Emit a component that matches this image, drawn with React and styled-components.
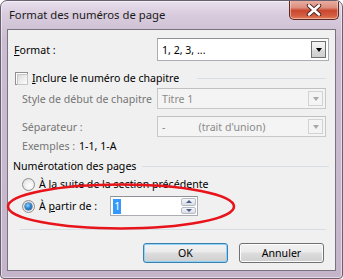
import React from 'react';
import styled, { createGlobalStyle } from 'styled-components';

const Global = createGlobalStyle`
  html, body { margin: 0; padding: 0; background: #ffffff; }
  body { font-family: "Noto Sans", "Open Sans", sans-serif; font-size: 10.6px; color: #000; }
  * { box-sizing: border-box; }
`;

const Window = styled.div`
  position: relative;
  width: 343px;
  height: 279px;
  border: 1px solid #6a5f70;
  border-radius: 7px 7px 4px 4px;
  background: linear-gradient(180deg, #e8e0ec 0px, #d8cbdd 14px, #cbbdd1 40px, #c4b5cb 100%);
  box-shadow: inset 0 0 0 1px rgba(255, 255, 255, 0.5);
  display: flex;
  flex-direction: column;
  padding: 0 6px 7px 6px;
  overflow: hidden;
`;

const TitleBar = styled.div`
  height: 28px;
  display: flex;
  align-items: flex-start;
  padding-left: 2px;
`;

const Title = styled.div`
  font-size: 11.3px;
  line-height: 16px;
  margin-top: 6px;
  color: #1a1a1a;
  flex: 1;
  white-space: nowrap;
`;

const CloseButton = styled.div`
  width: 50px;
  height: 20px;
  margin-top: -1px;
  margin-right: -3px;
  border: 1px solid #5a2a26;
  border-top: none;
  border-radius: 0 0 5px 5px;
  background: linear-gradient(180deg, #eab3a6 0%, #dc8e7e 40%, #c9482f 55%, #d25a3e 80%, #e07a57 100%);
  box-shadow: inset 0 0 0 1px rgba(255, 220, 210, 0.55);
  display: flex;
  align-items: center;
  justify-content: center;
`;

const Client = styled.div`
  flex: 1;
  border: 1px solid #7b7281;
  background: #f0f0f0;
  display: flex;
  flex-direction: column;
  padding: 8px 5px 0 6px;
`;

const FormatRow = styled.div`
  display: grid;
  grid-template-columns: 143px 172px;
  align-items: center;
  height: 23px;
`;

const Label = styled.span`
  color: ${(p) => (p.$disabled ? '#757575' : '#000')};
  white-space: nowrap;
  line-height: 14px;
`;

const Combo = styled.div`
  position: relative;
  height: ${(p) => p.$h}px;
  border: 1px solid ${(p) => (p.$disabled ? '#c8c8c8' : '#abadb3')};
  border-top-color: ${(p) => (p.$disabled ? '#c0c0c0' : '#8e9095')};
  background: ${(p) => (p.$disabled ? '#f4f4f4' : '#ffffff')};
  color: ${(p) => (p.$disabled ? '#8a8a8a' : '#000')};
  display: flex;
  align-items: center;
  padding-left: 4px;
  white-space: pre;
`;

const DropButton = styled.div`
  position: absolute;
  right: 2px;
  top: 2px;
  bottom: 2px;
  width: 15px;
  border: 1px solid ${(p) => (p.$disabled ? '#d2d2d2' : '#707070')};
  background: ${(p) =>
    p.$disabled
      ? '#f4f4f4'
      : 'linear-gradient(180deg, #f6f6f6 0%, #e8e8e8 50%, #d9d9d9 51%, #cfcfcf 100%)'};
  display: flex;
  align-items: center;
  justify-content: center;
`;

const Arrow = styled.div`
  width: 0;
  height: 0;
  border-left: 3.5px solid transparent;
  border-right: 3.5px solid transparent;
  border-top: 4px solid ${(p) => (p.$disabled ? '#a8a8a8' : '#000')};
`;

const CheckRow = styled.div`
  display: flex;
  align-items: center;
  height: 14px;
  margin-top: 10px;
  padding-left: 1px;
`;

const CheckBox = styled.div`
  width: 13px;
  height: 13px;
  border: 1px solid #8e8f8f;
  background: #fff;
  padding: 1px;
  margin-right: 4px;
  &::after {
    content: '';
    display: block;
    width: 100%;
    height: 100%;
    border: 1px solid #c6c6c6;
    background: linear-gradient(135deg, #dcdcdc 0%, #f0f0f0 60%, #fbfbfb 100%);
  }
`;

const Line = styled.div`
  flex: 1;
  height: 1px;
  background: #d5dfe5;
  margin-left: ${(p) => p.$ml}px;
  margin-right: ${(p) => p.$mr}px;
`;

const FieldRow = styled.div`
  display: grid;
  grid-template-columns: 135px 169px;
  align-items: center;
  height: 21px;
  margin-top: ${(p) => p.$mt}px;
  padding-left: 8px;
`;

const ExampleRow = styled.div`
  display: flex;
  align-items: center;
  height: 14px;
  margin-top: 2px;
  padding-left: 8px;
  gap: 4px;
`;

const HeadingRow = styled.div`
  display: flex;
  align-items: center;
  height: 14px;
  margin-top: 6px;
  margin-left: -1px;
`;

const RadioRow = styled.div`
  display: flex;
  align-items: center;
  height: ${(p) => p.$h}px;
  margin-top: ${(p) => p.$mt}px;
  padding-left: 8px;
`;

const Radio = styled.div`
  width: 13px;
  height: 13px;
  border-radius: 50%;
  border: 1px solid #8b8d8f;
  background: radial-gradient(circle at 60% 60%, #ffffff 0%, #f2f2f2 40%, #d4d4d4 100%);
  display: flex;
  align-items: center;
  justify-content: center;
  margin-right: 4px;
  &::after {
    content: '';
    display: ${(p) => (p.$checked ? 'block' : 'none')};
    width: 7px;
    height: 7px;
    border-radius: 50%;
    background: radial-gradient(circle at 40% 35%, #8fd6ff 0%, #2b88d8 45%, #173f7a 100%);
    box-shadow: 0 0 0 0.5px #1b4378;
  }
`;

const U = styled.span`
  text-decoration: underline;
  text-underline-offset: 1px;
`;

const SpinBox = styled.div`
  position: relative;
  width: 88px;
  height: 20px;
  margin-left: 13px;
  border: 1px solid #abadb3;
  border-top-color: #8e9095;
  background: #fff;
  display: flex;
  align-items: center;
  padding-left: 2px;
`;

const Selected = styled.span`
  background: #3399ff;
  color: #fff;
  padding: 0 1px;
  line-height: 15px;
`;

const SpinButtons = styled.div`
  position: absolute;
  right: 1px;
  top: 1px;
  bottom: 1px;
  width: 15px;
  display: flex;
  flex-direction: column;
  gap: 1px;
`;

const SpinHalf = styled.div`
  flex: 1;
  border: 1px solid #b6bcc6;
  border-radius: 2px;
  background: linear-gradient(180deg, #f6f7f9 0%, #e6e9ee 50%, #d9dde4 100%);
  display: flex;
  align-items: center;
  justify-content: center;
`;

const SmallArrow = styled.div`
  width: 0;
  height: 0;
  border-left: 3px solid transparent;
  border-right: 3px solid transparent;
  ${(p) => (p.$up ? 'border-bottom: 3px solid #4a5d86;' : 'border-top: 3px solid #4a5d86;')}
`;

const Separator = styled.div`
  height: 1px;
  background: #d5dfe5;
  margin: 13px 4px 0 6px;
`;

const ButtonRow = styled.div`
  display: flex;
  justify-content: flex-end;
  gap: 11px;
  margin-top: 13px;
  margin-right: 6px;
`;

const Button = styled.div`
  width: 85px;
  height: 20px;
  border: 1px solid ${(p) => (p.$default ? '#3c7fb1' : '#707070')};
  border-radius: 3px;
  background: linear-gradient(180deg, #f2f2f2 0%, #ebebeb 45%, #dddddd 50%, #cfcfcf 100%);
  box-shadow: inset 0 0 0 1px ${(p) => (p.$default ? '#8fd3f6' : '#fcfcfc')};
  display: flex;
  align-items: center;
  justify-content: center;
  color: #000;
`;

const Annotation = styled.svg`
  position: absolute;
  left: 0;
  top: 0;
  pointer-events: none;
`;

function ComboBox({ h, disabled, children }) {
  return (
    <Combo $h={h} $disabled={disabled}>
      {children}
      <DropButton $disabled={disabled}>
        <Arrow $disabled={disabled} />
      </DropButton>
    </Combo>
  );
}

export default function App() {
  return (
    <>
      <Global />
      <Window>
        <TitleBar>
          <Title>Format des numéros de page</Title>
          <CloseButton>
            <svg width="16" height="12" viewBox="0 0 16 12">
              <path d="M3 1.5 L13 10.5 M13 1.5 L3 10.5" stroke="#4a2220" strokeWidth="4.4" strokeLinecap="round" />
              <path d="M3 1.5 L13 10.5 M13 1.5 L3 10.5" stroke="#ffffff" strokeWidth="2.6" strokeLinecap="round" />
            </svg>
          </CloseButton>
        </TitleBar>
        <Client>
          <FormatRow>
            <Label>
              <U>F</U>ormat :
            </Label>
            <ComboBox h={23}>1, 2, 3, ...</ComboBox>
          </FormatRow>
          <CheckRow>
            <CheckBox />
            <Label>
              <U>I</U>nclure le numéro de chapitre
            </Label>
            <Line $ml={18} $mr={4} />
          </CheckRow>
          <FieldRow $mt={3}>
            <Label $disabled>Style de début de chapitre</Label>
            <ComboBox h={21} disabled>
              Titre 1
            </ComboBox>
          </FieldRow>
          <FieldRow $mt={7}>
            <Label $disabled>Séparateur :</Label>
            <ComboBox h={21} disabled>
              {"-            (trait d'union)"}
            </ComboBox>
          </FieldRow>
          <ExampleRow>
            <Label $disabled>Exemples :</Label>
            <Label>1-1, 1-A</Label>
          </ExampleRow>
          <HeadingRow>
            <Label>Numérotation des pages</Label>
            <Line $ml={6} $mr={1} />
          </HeadingRow>
          <RadioRow $h={14} $mt={4}>
            <Radio />
            <Label>À la suite de la section précédente</Label>
          </RadioRow>
          <RadioRow $h={20} $mt={5}>
            <Radio $checked />
            <Label>
              À <U>p</U>artir de :
            </Label>
            <SpinBox>
              <Selected>1</Selected>
              <SpinButtons>
                <SpinHalf>
                  <SmallArrow $up />
                </SpinHalf>
                <SpinHalf>
                  <SmallArrow />
                </SpinHalf>
              </SpinButtons>
            </SpinBox>
          </RadioRow>
          <Separator />
          <ButtonRow>
            <Button $default>OK</Button>
            <Button>Annuler</Button>
          </ButtonRow>
        </Client>
        <Annotation width="343" height="279" viewBox="0 0 343 279">
          <ellipse cx="120" cy="205.5" rx="113" ry="22" fill="none" stroke="#e8141b" strokeWidth="2.6" />
        </Annotation>
      </Window>
    </>
  );
}
